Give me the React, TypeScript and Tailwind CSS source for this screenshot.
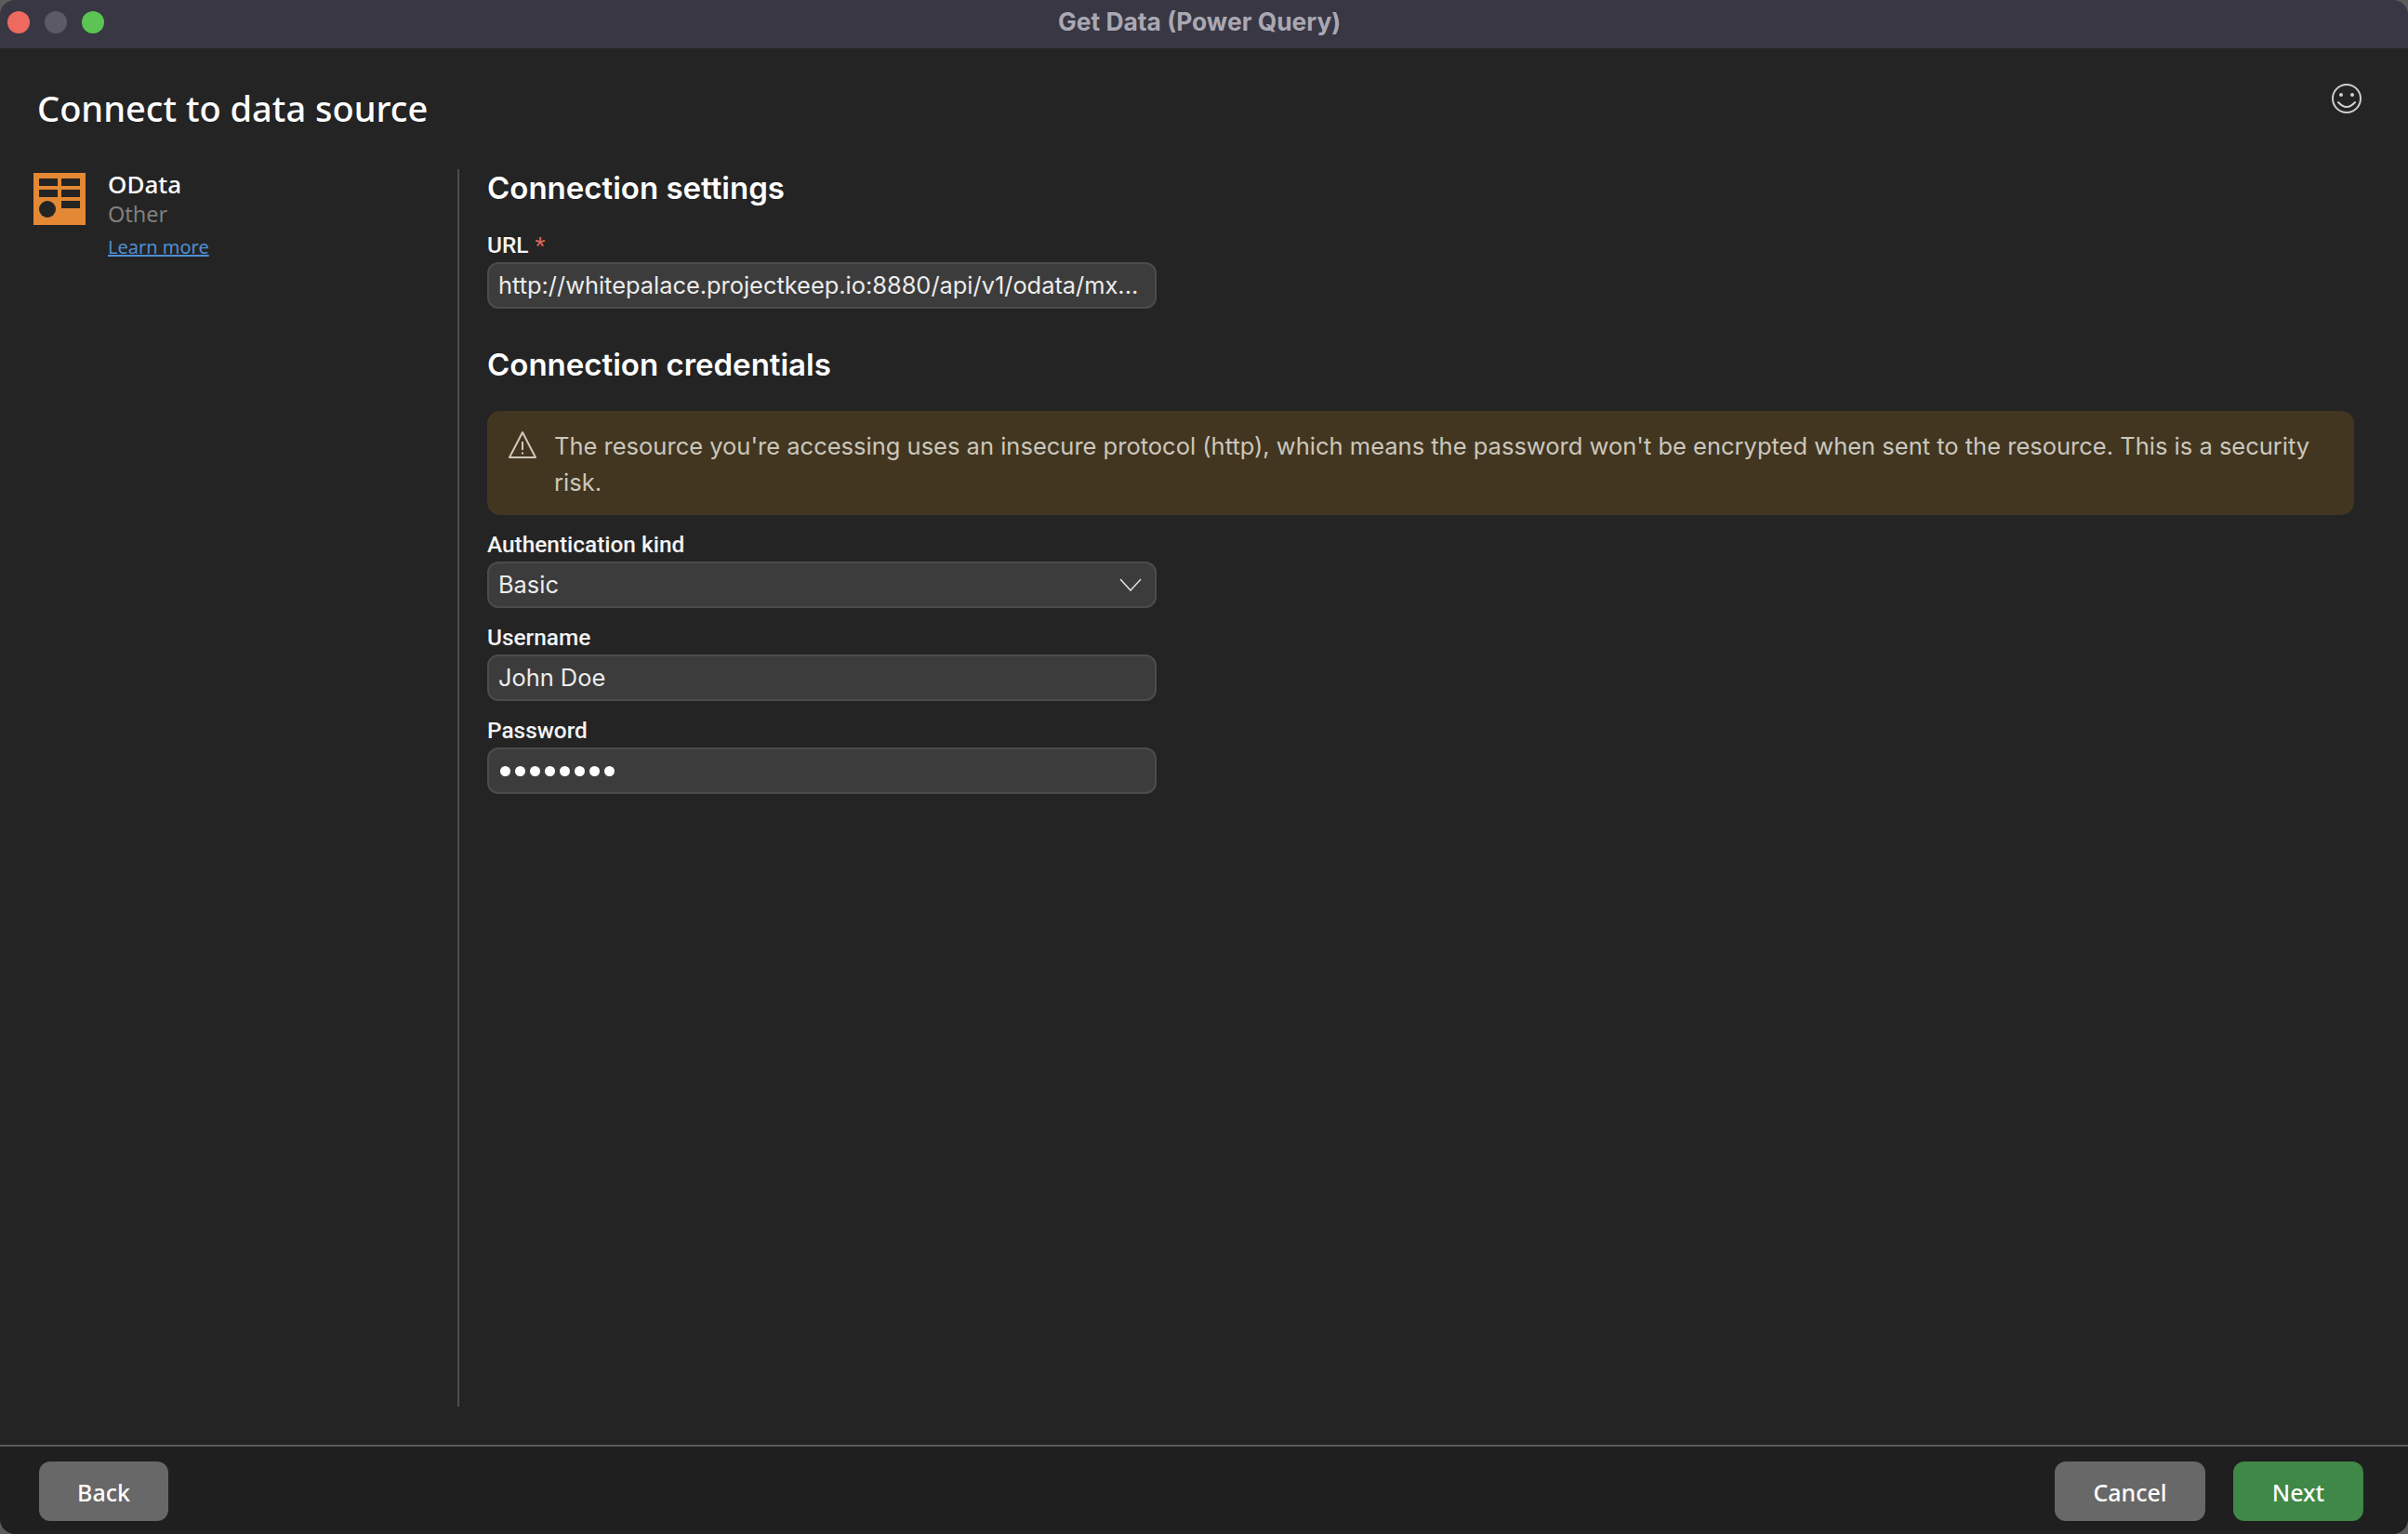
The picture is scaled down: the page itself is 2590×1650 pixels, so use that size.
const sans = "font-['Inter',sans-serif]";
const ui = "font-['Noto_Sans',sans-serif]";

function Field({ label, required, children }: { label: string; required?: boolean; children: React.ReactNode }) {
  return (
    <div className="w-[720px]">
      <div className="h-[31px] font-['Roboto',sans-serif] text-[24.4px] leading-[31px] font-medium text-[#f4f4f4]">
        {label}
        {required && <span className="ml-[7px] text-[#d9635c]">*</span>}
      </div>
      <div className={`${sans} mt-[3px] flex h-[50px] items-center justify-between rounded-[12px] border-2 border-[#4c4c4c] bg-[#3c3c3c] pl-[10px] pr-[14px] text-[25.4px] text-[#ececec]`}>
        {children}
      </div>
    </div>
  );
}

function FooterButton({ label, green, width }: { label: string; green?: boolean; width: string }) {
  return (
    <button
      className={`${ui} ${width} h-[64px] rounded-[12px] pt-[3px] text-[25px] font-medium text-white ${
        green ? "bg-[#3f8847]" : "bg-[#686868]"
      }`}
    >
      {label}
    </button>
  );
}

export default function App() {
  return (
    <div className="flex h-[1650px] w-[2590px] flex-col overflow-hidden bg-[#5c5c5c]">
      {/* Title bar */}
      <div className="relative flex h-[52px] shrink-0 items-center gap-[16px] rounded-t-[16px] bg-[#383743] pb-[4px] pl-[8px]">
        <span className="h-[24px] w-[24px] rounded-full bg-[#ee695e]" />
        <span className="h-[24px] w-[24px] rounded-full bg-[#5b5a66]" />
        <span className="h-[24px] w-[24px] rounded-full bg-[#5cc454]" />
        <span className={`${sans} absolute left-[1138px] top-[7px] text-[26.4px] leading-[32px] font-bold text-[#a9a8b3]`}>
          Get Data (Power Query)
        </span>
      </div>

      {/* Body */}
      <div className="relative flex min-h-0 flex-1 flex-col bg-[#242424] pl-[36px] pr-[58px]">
        <div className={`${ui} mt-[37px] ml-[4px] text-[38px] leading-[54px] font-medium text-white`}>
          Connect to data source
        </div>
        <svg
          width="34"
          height="34"
          viewBox="-17 -17 34 34"
          fill="none"
          stroke="#cfcfcf"
          strokeWidth="2"
          className="absolute right-[49px] top-[37px]"
        >
          <circle r="15" />
          <path d="M-9 4 Q0 14 9 4" strokeLinecap="round" />
          <circle cx="-6" cy="-4" r="2" fill="#cfcfcf" stroke="none" />
          <circle cx="6" cy="-4" r="2" fill="#cfcfcf" stroke="none" />
        </svg>

        <div className="mt-[39px] flex h-[1331px]">
          {/* Left */}
          <div className="flex w-[456px] shrink-0 gap-[24px] pt-[4px]">
            <svg width="56" height="56" viewBox="0 0 56 56" className="shrink-0">
              <rect width="56" height="56" fill="#e38835" />
              <g fill="#242424">
                <rect x="6" y="6" width="20" height="8" />
                <rect x="30" y="6" width="20" height="8" />
                <rect x="6" y="18" width="20" height="8" />
                <rect x="30" y="18" width="20" height="8" />
                <rect x="30" y="30" width="20" height="8" />
                <circle cx="15" cy="39" r="9" />
              </g>
            </svg>
            <div className={`${ui} mt-[-3px]`}>
              <div className="text-[26px] leading-[30px] font-medium text-white">OData</div>
              <div className="mt-[1px] text-[23.5px] leading-[32px] text-[#7f7f7f]">Other</div>
              <a className="mt-[5px] block text-[20px] leading-[30px] text-[#4e8fd4] underline">Learn more</a>
            </div>
          </div>

          {/* Right */}
          <div className="flex-1 border-l-2 border-[#4d4d4d] pl-[30px]">
            <h2 className={`${sans} text-[33px] leading-[40px] font-semibold text-white`}>Connection settings</h2>
            <div className="mt-[26px]">
              <Field label="URL" required>
                <span className="whitespace-nowrap">http://whitepalace.projectkeep.io:8880/api/v1/odata/mx...</span>
              </Field>
            </div>
            <h2 className={`${sans} mt-[40px] text-[33px] leading-[40px] font-semibold text-white`}>
              Connection credentials
            </h2>
            <div className="mt-[30px] flex h-[112px] gap-[18px] rounded-[14px] bg-[#423620] pl-[22px] pr-[36px] pt-[18px]">
              <svg width="32" height="32" viewBox="0 0 32 32" fill="none" className="mt-[2px] shrink-0" stroke="#cfc9bd" strokeWidth="2">
                <path d="M16 3 L30 30 H2 Z" strokeLinejoin="round" />
                <path d="M16 13 V22 M16 24.5 V26.5" />
              </svg>
              <p className={`${sans} text-[25.5px] leading-[39px] text-[#cbc7bd]`}>
                The resource you're accessing uses an insecure protocol (http), which means the password won't be encrypted when sent to the resource. This is a security risk.
              </p>
            </div>
            <div className="mt-[16px] flex flex-col gap-[16px]">
              <Field label="Authentication kind">
                <span>Basic</span>
                <svg width="24" height="14" viewBox="0 0 24 14" fill="none" stroke="#dcdcdc" strokeWidth="1.6">
                  <path d="M1 1 L12 13 L23 1" />
                </svg>
              </Field>
              <Field label="Username">
                <span>John Doe</span>
              </Field>
              <Field label="Password">
                <span className="flex gap-[5px] pl-[2px]">
                  {Array.from({ length: 8 }).map((_, i) => (
                    <i key={i} className="h-[11px] w-[11px] rounded-full bg-white" />
                  ))}
                </span>
              </Field>
            </div>
          </div>
        </div>
      </div>

      {/* Footer */}
      <div className="flex h-[96px] shrink-0 items-start justify-between rounded-b-[16px] border-t-2 border-[#5a5a5a] bg-[#1f1f1f] pl-[42px] pr-[48px] pt-[16px]">
        <FooterButton label="Back" width="w-[139px]" />
        <div className="flex gap-[30px]">
          <FooterButton label="Cancel" width="w-[162px]" />
          <FooterButton label="Next" green width="w-[140px]" />
        </div>
      </div>
    </div>
  );
}
